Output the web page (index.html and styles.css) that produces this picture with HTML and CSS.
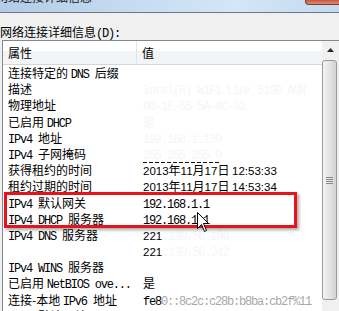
FILE: index.html
```html
<!DOCTYPE html>
<html lang="zh-CN">
<head>
<meta charset="utf-8">
<title>网络连接详细信息</title>
<link rel="stylesheet" href="styles.css">
</head>
<body>
<div class="window">
  <div class="titlebar">
    <span class="title">网络连接详细信息</span>
    <span class="close"></span>
  </div>
  <div class="label">网络连接详细信息<span class="m">(D):</span></div>
  <div class="listbox">
    <div class="list">
      <div class="header"><div class="c1">属性</div><div class="c2">值</div></div>
      <div class="row"><div class="c1">连接特定的 <span class="m">DNS </span>后缀</div><div class="c2"></div></div>
      <div class="row"><div class="c1">描述</div><div class="c2"><span class="m faint">Intel(R) WiFi Link 5100 AGN</span></div></div>
      <div class="row"><div class="c1">物理地址</div><div class="c2"><span class="m faint">00-1E-65-5A-4C-02</span></div></div>
      <div class="row"><div class="c1">已启用 <span class="m">DHCP</span></div><div class="c2"><span class="faint">是</span></div></div>
      <div class="row"><div class="c1"><span class="m">IPv4 </span>地址</div><div class="c2"><span class="m faint">192.168.1.130</span></div></div>
      <div class="row"><div class="c1"><span class="m">IPv4 </span>子网掩码</div><div class="c2"><span class="m faint dash">255.255.255.0</span></div></div>
      <div class="row"><div class="c1">获得租约的时间</div><div class="c2"><span class="s">2013</span>年<span class="s">11</span>月<span class="s">17</span>日 <span class="s">12:53:33</span></div></div>
      <div class="row"><div class="c1">租约过期的时间</div><div class="c2"><span class="s">2013</span>年<span class="s">11</span>月<span class="s">17</span>日 <span class="s">14:53:34</span></div></div>
      <div class="row"><div class="c1"><span class="m">IPv4 </span>默认网关</div><div class="c2"><span class="m">192.168.1.1</span></div></div>
      <div class="row"><div class="c1"><span class="m">IPv4 DHCP </span>服务器</div><div class="c2"><span class="m">192.168.1.1</span></div></div>
      <div class="row"><div class="c1"><span class="m">IPv4 DNS </span>服务器</div><div class="c2"><span class="s">221</span><span class="m faint">.130.56.186</span></div></div>
      <div class="row"><div class="c1"></div><div class="c2"><span class="s">221</span><span class="m faint">.130.56.242</span></div></div>
      <div class="row"><div class="c1"><span class="m">IPv4 WINS </span>服务器</div><div class="c2"></div></div>
      <div class="row"><div class="c1">已启用 <span class="m">NetBIOS ove...</span></div><div class="c2">是</div></div>
      <div class="row"><div class="c1">连接-本地 <span class="m">IPv6 </span>地址</div><div class="c2"><span class="m">fe8</span><span class="m dim">0::8c2c:c28b:b8ba:cb2f%11</span></div></div>
      <div class="row"><div class="c1"><span class="m">IPv6 </span>默认网关</div><div class="c2"></div></div>
    </div>
    <div class="scrollbar">
      <div class="sb-btn">
        <svg width="7" height="4" viewBox="0 0 7 4"><path d="M3.5 0 L7 4 L0 4 Z" fill="#2a2a2a"/></svg>
      </div>
      <div class="thumb">
        <svg width="7" height="7" viewBox="0 0 7 7"><path d="M0 0.5H7M0 2.5H7M0 4.5H7M0 6.5H7" stroke="#8a8a8a" stroke-width="1"/></svg>
      </div>
    </div>
  </div>
  <div class="highlight"></div>
  <svg class="cursor" width="13" height="21" viewBox="0 0 13 21">
    <path d="M0.5 0.5 L0.5 16.5 L4.5 12.5 L7.5 19.5 L9.5 18.5 L6.5 11.5 L11.5 11.5 Z" fill="#fff" stroke="#000" stroke-width="1" stroke-linejoin="miter"/>
  </svg>
</div>
</body>
</html>
```

FILE: styles.css
```css
* { box-sizing: border-box; }

body {
  margin: 0;
  background: #f0f0f0;
  font-family: "Noto Sans CJK SC", sans-serif;
  font-size: 12px;
  color: #000;
  overflow: hidden;
}

.window {
  position: relative;
  width: 339px;
  height: 311px;
  overflow: hidden;
}

.titlebar {
  height: 13px;
  border-bottom: 1px solid #6f7780;
  background: linear-gradient(90deg, #b2cbe6 0%, #c6dcf2 40%, #d4e6f7 70%, #c2d9f0 100%);
  display: flex;
  justify-content: space-between;
  align-items: flex-start;
  overflow: hidden;
}

.title {
  margin-top: -11px;
  margin-left: -4px;
  line-height: 16px;
  color: #1a1a1a;
}

.close {
  width: 34px;
  height: 5px;
  background: linear-gradient(#c4573f, #e28a74);
  border-left: 1px solid #7a3b2e;
  border-bottom: 1px solid #7a3b2e;
  border-radius: 0 0 0 4px;
}

.label {
  padding-top: 11px;
  height: 27px;
  line-height: 16px;
  white-space: nowrap;
}

.listbox {
  margin-left: 2px;
  height: 271px;
  border-left: 1px solid #828790;
  border-top: 1px solid #828790;
  background: #fff;
  display: flex;
}

.list {
  flex: 1;
  min-width: 0;
}

.header {
  display: flex;
  height: 24px;
  line-height: 23px;
  border-bottom: 1px solid #d5d5d5;
  background: linear-gradient(#ffffff 0, #ffffff 42%, #f3f4f6 42%, #f3f4f6 100%);
}

.header .c1 {
  padding-left: 5px;
  border-right: 1px solid #e3e4e6;
}

.header .c2 {
  padding-left: 5px;
}

.row {
  display: flex;
  height: 16.2px;
  line-height: 16px;
}

.c1 {
  width: 134px;
  padding-left: 5px;
  white-space: nowrap;
  overflow: hidden;
}

.c2 {
  padding-left: 6px;
  white-space: nowrap;
}

.m {
  font-family: "Liberation Mono", monospace;
  font-size: 12px;
  letter-spacing: -1.2px;
}

.s {
  font-family: "Liberation Sans", sans-serif;
  font-size: 11.5px;
}

.faint {
  color: #f6f6f6;
}

.dim {
  color: #a8a8a8;
}

.dash {
  background: repeating-linear-gradient(90deg, #111 0, #111 4px, transparent 4px, transparent 6px) left bottom / 100% 1px no-repeat;
}

.scrollbar {
  width: 17px;
  background: #f0f0f0;
  display: flex;
  flex-direction: column;
  align-items: flex-start;
}

.sb-btn {
  width: 17px;
  height: 17px;
  display: flex;
  align-items: center;
  justify-content: center;
}

.thumb {
  margin-top: 2px;
  width: 15px;
  height: 240px;
  border: 1px solid #9a9a9a;
  border-radius: 3px;
  background: linear-gradient(90deg, #f4f4f4, #e3e3e3 50%, #d2d2d2);
  display: flex;
  align-items: center;
  justify-content: center;
}

.highlight {
  position: absolute;
  left: 4px;
  top: 192px;
  width: 293px;
  height: 36px;
  border: 3px solid #e8121a;
  box-shadow: 2px 2px 3px rgba(0, 0, 0, 0.35);
}

.cursor {
  position: absolute;
  left: 197px;
  top: 212px;
}
```
